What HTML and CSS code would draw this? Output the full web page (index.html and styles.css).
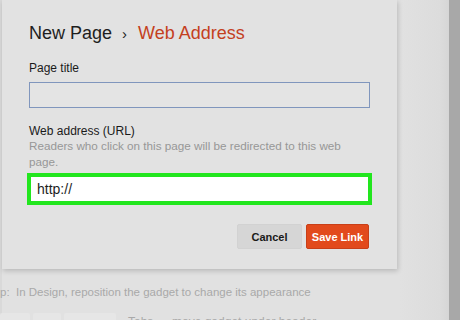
FILE: index.html
```html
<!DOCTYPE html>
<html>
<head>
<meta charset="utf-8">
<link rel="stylesheet" href="styles.css">
</head>
<body>
<div class="main">
  <div class="dialog">
    <h1 class="title">New Page<span class="sep">›</span><span class="accent">Web Address</span></h1>
    <div class="label label-first">Page title</div>
    <div class="input"></div>
    <div class="label label-second">Web address (URL)</div>
    <div class="help">Readers who click on this page will be redirected to this web page.</div>
    <div class="url-box">http://</div>
    <div class="actions">
      <button class="btn btn-cancel">Cancel</button>
      <button class="btn btn-save">Save Link</button>
    </div>
  </div>
  <div class="tip">p:  In Design, reposition the gadget to change its appearance</div>
  <div class="row">
    <div class="chips"><span class="chip c1"></span><span class="chip c2"></span><span class="chip c3"></span></div>
    <div class="row-text">Tabs — move gadget under header</div>
  </div>
</div>
<div class="strip"></div>
</body>
</html>
```
FILE: styles.css
```css
html, body {
  margin: 0;
  padding: 0;
}
body {
  width: 460px;
  height: 320px;
  overflow: hidden;
  display: flex;
  background: #e1e1e1;
  font-family: "Liberation Sans", Arial, sans-serif;
}
.main {
  width: 449px;
  padding-left: 2px;
  box-sizing: border-box;
  background: linear-gradient(to right, #d9d9d9 0, #d9d9d9 2px, #e1e1e1 2px, #e1e1e1 400px, #dcdcdc 440px, #d6d6d6 449px);
}
.strip {
  width: 11px;
  background: #a8a8a8;
}
.dialog {
  width: 395px;
  box-sizing: border-box;
  padding: 22px 27px 20px 27px;
  background: #e2e2e2;
  box-shadow: 1px 2px 5px rgba(0, 0, 0, 0.18);
}
.title {
  margin: 0;
  font-size: 18px;
  line-height: 22px;
  font-weight: normal;
  color: #1e1e1e;
}
.sep {
  display: inline-block;
  padding: 0 11px 0 10px;
  font-size: 15px;
}
.accent {
  color: #c4401e;
}
.label {
  font-size: 12px;
  line-height: 14px;
  color: #1a1a1a;
}
.label-first {
  margin-top: 16px;
}
.label-second {
  margin-top: 16px;
}
.input {
  margin-top: 7px;
  height: 26px;
  box-sizing: border-box;
  border: 1px solid #8096bd;
  background: #e4e4e4;
}
.help {
  font-size: 11.7px;
  line-height: 16px;
  color: #979797;
  padding-right: 20px;
}
.url-box {
  margin: 3px -2px 0 -2px;
  height: 32px;
  box-sizing: border-box;
  border: 4px solid #22e61e;
  background: #ffffff;
  padding-left: 6px;
  font-size: 14px;
  line-height: 24px;
  color: #1e1e1e;
}
.actions {
  margin-top: 19px;
  display: flex;
  justify-content: flex-end;
  gap: 4px;
  margin-right: 1px;
}
.btn {
  height: 25px;
  font-family: "Liberation Sans", Arial, sans-serif;
  font-size: 11px;
  font-weight: bold;
  border-radius: 2px;
  padding: 0;
}
.btn-cancel {
  width: 65px;
  background: #d6d6d6;
  border: 1px solid #d2d2d2;
  color: #1a1a1a;
}
.btn-save {
  width: 63px;
  background: #e24a1c;
  border: 1px solid #c83f18;
  color: #ffffff;
}
.tip {
  margin: 16px 0 0 -2px;
  font-size: 11.5px;
  line-height: 14px;
  color: #a9a9a9;
  white-space: pre;
}
.row {
  margin-top: 14px;
  display: flex;
  align-items: flex-start;
  margin-left: -2px;
}
.chips {
  display: flex;
  gap: 3px;
  width: 117px;
}
.chip {
  display: block;
  height: 12px;
  background: #e6e6e6;
  border-radius: 2px;
}
.c1 { width: 30px; }
.c2 { width: 28px; }
.c3 { width: 52px; }
.row-text {
  margin-left: 11px;
  margin-top: 2px;
  font-size: 12px;
  line-height: 14px;
  color: #a9a9a9;
}
```
